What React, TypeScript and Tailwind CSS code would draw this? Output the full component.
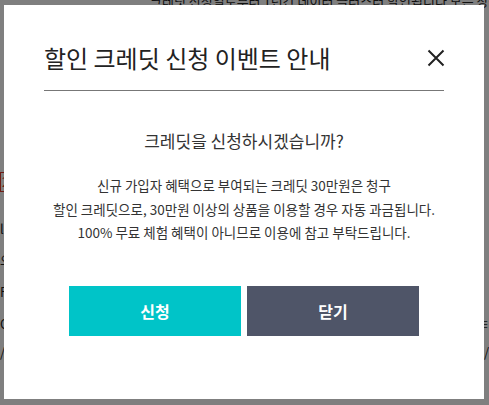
import React from "react";

const font = { fontFamily: '"Noto Sans CJK KR", "Noto Sans", sans-serif' };

const App = () => {
	return (
		<div className="relative h-[405px] w-full overflow-hidden bg-white" style={font}>
			{/* Page behind the dialog */}
			<div className="flex flex-col text-[13px] text-[#222]">
				<p className="-mt-[7px] whitespace-nowrap pl-[150px] leading-[16px]">
					크레딧 신청일로부터 1년간 데이터 클러스터 할인됩니다 모든 상품 결제에 이용
				</p>
				<div className="mt-[163px] flex h-[20px] w-[60px] items-center border border-[#e03a2a] pl-[1px] text-[#e03a2a]">
					2
				</div>
				<p className="mt-[22px] leading-[30px]">l</p>
				<p className="leading-[32px]">으</p>
				<p className="leading-[32px]">F</p>
				<div className="flex justify-between leading-[32px]">
					<span>C</span>
					<span>≡</span>
				</div>
				<div className="flex justify-between leading-[24px]">
					<span>/</span>
					<span>/</span>
				</div>
			</div>

			{/* Overlay */}
			<div className="absolute inset-0 bg-black/50 pl-[4px] pt-[5px]">
				<div className="flex h-[394px] w-[480px] flex-col bg-white px-[40px]">
					<div className="flex items-center justify-between border-b border-[#777] pb-[14px] pt-[35px]">
						<h2 className="text-[24px] leading-[36px] text-[#222]">할인 크레딧 신청 이벤트 안내</h2>
						<button className="mr-[-1px] flex h-[18px] w-[18px] items-center justify-center">
							<svg width="18" height="18" viewBox="0 0 18 18" fill="none">
								<path d="M1.5 1.5 L16.5 16.5 M16.5 1.5 L1.5 16.5" stroke="#222" strokeWidth="2" />
							</svg>
						</button>
					</div>

					<p className="mt-[38px] text-center text-[17px] leading-[24px] text-[#333]">
						크레딧을 신청하시겠습니까?
					</p>

					<p className="mt-[21px] text-center text-[13.5px] leading-[23.5px] text-[#333]">
						신규 가입자 혜택으로 부여되는 크레딧 30만원은 청구
						<br />
						할인 크레딧으로, 30만원 이상의 상품을 이용할 경우 자동 과금됩니다.
						<br />
						100% 무료 체험 혜택이 아니므로 이용에 참고 부탁드립니다.
					</p>

					<div className="mt-[41px] flex justify-center gap-[6px]">
						<button className="h-[50px] w-[172px] bg-[#00c4c8] text-[16px] font-bold text-white">
							신청
						</button>
						<button className="h-[50px] w-[172px] bg-[#4f5568] text-[16px] font-bold text-white">
							닫기
						</button>
					</div>
				</div>
			</div>
		</div>
	);
};

export default App;
